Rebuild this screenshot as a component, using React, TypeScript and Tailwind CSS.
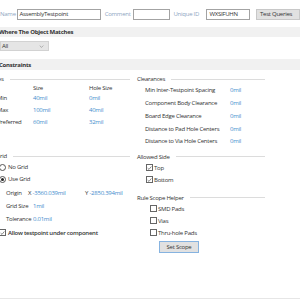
import React from 'react';

const Check = ({ checked }: { checked?: boolean }) => (
  <span className="inline-flex w-[7px] h-[7px] border border-[#666] bg-white items-center justify-center shrink-0">
    {checked && (
      <svg viewBox="0 0 8 8" className="w-[6px] h-[6px]">
        <path d="M1 4.2 L3.2 6.2 L7 1.5" fill="none" stroke="#444" strokeWidth="1" />
      </svg>
    )}
  </span>
);

const Radio = ({ on }: { on?: boolean }) => (
  <span className="inline-flex w-[7px] h-[7px] rounded-full border border-[#555] bg-white items-center justify-center shrink-0">
    {on && <span className="w-[3px] h-[3px] rounded-full bg-[#222]" />}
  </span>
);

const GroupHeader = ({ title }: { title: string }) => (
  <div className="flex items-center h-[10px]">
    <span className="whitespace-nowrap">{title}</span>
    <span className="h-px bg-[#dcdcdc] ml-[6px] flex-1" />
  </div>
);

const Val = ({ children }: { children: React.ReactNode }) => (
  <span className="text-[#3f8ccd]">{children}</span>
);

export default function App() {
  const clearances = [
    'Min Inter-Testpoint Spacing',
    'Component Body Clearance',
    'Board Edge Clearance',
    'Distance to Pad Hole Centers',
    'Distance to Via Hole Centers',
  ];

  return (
    <div className="w-[300px] h-[299px] overflow-hidden bg-white border-b border-[#e6e6e6] text-[6px] tracking-[-0.25px] leading-none text-[#333] font-['Open_Sans',sans-serif]">
      {/* Top query row */}
      <div className="flex items-center h-[12px] mt-[8px] whitespace-nowrap">
        <span className="w-[18px] text-[#8ea5bf]">Name</span>
        <div className="w-[86px] h-[11px] border border-[#a3a3a3] flex items-center pl-[1px]">AssemblyTestpoint</div>
        <span className="w-[29px] ml-[4px] text-[#8ea5bf]">Comment</span>
        <div className="w-[38px] h-[11px] border border-[#a3a3a3]" />
        <span className="w-[34px] ml-[4px] text-[#8ea5bf]">Unique ID</span>
        <div className="w-[45px] h-[11px] border border-[#a3a3a3] flex items-center pl-[2px]">WXSIFUHN</div>
        <div className="ml-[6px] w-[44px] h-[11px] shrink-0 bg-[#e1e1e1] border border-[#c8c8c8] flex items-center pl-[3px]">Test Queries</div>
      </div>

      {/* Where the object matches */}
      <div className="mt-[7px] h-[10px] bg-[#f1f1f1] flex items-center font-bold -ml-[1px]">Where The Object Matches</div>
      <div className="mt-[4px] w-[49px] h-[10px] bg-[#e5e5e5] border border-[#d2d2d2] flex items-center justify-between px-[1px]">
        <span>All</span>
        <svg viewBox="0 0 8 5" className="w-[5px] h-[3px] mr-[3px]">
          <path d="M1 1 L4 4 L7 1" fill="none" stroke="#888" strokeWidth="1" />
        </svg>
      </div>

      {/* Constraints */}
      <div className="mt-[8px] h-[11px] bg-[#f1f1f1] flex items-center font-bold -ml-[1px]">Constraints</div>

      <div className="flex">
        {/* Left column */}
        <div className="w-[134px] -ml-[4px] shrink-0">
          <div className="mt-[4px] -ml-[5px]">
            <GroupHeader title="Sizes" />
          </div>
          <div className="flex items-center h-[8px] ml-[1px]">
            <span className="w-[36px]" />
            <span className="w-[56px]">Size</span>
            <span>Hole Size</span>
          </div>
          {[
            ['Min', '40mil', '0mil'],
            ['Max', '100mil', '40mil'],
            ['Preferred', '60mil', '32mil'],
          ].map(([l, s, h]) => (
            <div key={l} className="flex items-center h-[12px] ml-[1px]">
              <span className="w-[36px]">{l}</span>
              <span className="w-[56px]"><Val>{s}</Val></span>
              <Val>{h}</Val>
            </div>
          ))}

          <div className="mt-[23px]">
            <GroupHeader title="Grid" />
          </div>
          <div className="flex items-center h-[12px] gap-[2px] ml-[3px]">
            <Radio />
            <span>No Grid</span>
          </div>
          <div className="flex items-center h-[12px] gap-[2px] ml-[3px]">
            <Radio on />
            <span>Use Grid</span>
          </div>
          <div className="flex items-center h-[15px] ml-[10px] pt-[1px]">
            <span className="w-[22px]">Origin</span>
            <span className="w-[57px]">X <Val>-3560.039mil</Val></span>
            <span>Y <Val>-2850.394mil</Val></span>
          </div>
          <div className="flex items-center h-[12px] ml-[10px]">
            <span className="w-[27px]">Grid Size</span>
            <Val>1mil</Val>
          </div>
          <div className="flex items-center h-[13px] ml-[10px]">
            <span className="w-[27px] shrink-0">Tolerance</span>
            <Val>0.01mil</Val>
          </div>
          <div className="flex items-center h-[15px] gap-[2px] ml-[3px] font-semibold">
            <Check checked />
            <span>Allow testpoint under component</span>
          </div>
        </div>

        {/* Right column */}
        <div className="ml-[7px] w-[128px] shrink-0">
          <div className="mt-[4px]">
            <GroupHeader title="Clearances" />
          </div>
          {clearances.map((c) => (
            <div key={c} className="flex items-center h-[12.75px] pl-[8px]">
              <span className="w-[85px] whitespace-nowrap">{c}</span>
              <Val>0mil</Val>
            </div>
          ))}

          <div className="mt-[4px]">
            <GroupHeader title="Allowed Side" />
          </div>
          <div className="flex items-center h-[12px] gap-[1px] pl-[9px]">
            <Check checked />
            <span>Top</span>
          </div>
          <div className="flex items-center h-[12px] gap-[1px] pl-[9px]">
            <Check checked />
            <span>Bottom</span>
          </div>

          <div className="mt-[7px]">
            <GroupHeader title="Rule Scope Helper" />
          </div>
          {['SMD Pads', 'Vias', 'Thru-hole Pads'].map((s) => (
            <div key={s} className="flex items-center h-[12px] gap-[1px] pl-[13px]">
              <Check />
              <span>{s}</span>
            </div>
          ))}
          <div className="mt-[2px] ml-[22px] w-[40px] h-[12px] bg-[#e1e1e1] border border-[#86b3e0] flex items-center justify-center">
            Set Scope
          </div>
        </div>
      </div>
    </div>
  );
}
